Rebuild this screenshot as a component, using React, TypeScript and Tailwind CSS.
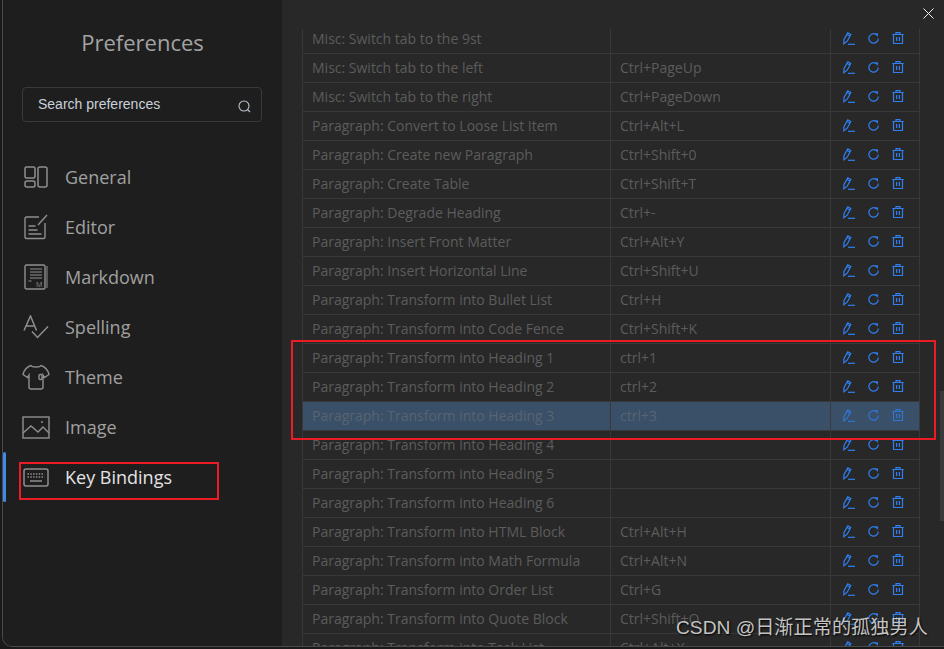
const rows = [
  ['Misc: Switch tab to the 9st', ''],
  ['Misc: Switch tab to the left', 'Ctrl+PageUp'],
  ['Misc: Switch tab to the right', 'Ctrl+PageDown'],
  ['Paragraph: Convert to Loose List Item', 'Ctrl+Alt+L'],
  ['Paragraph: Create new Paragraph', 'Ctrl+Shift+0'],
  ['Paragraph: Create Table', 'Ctrl+Shift+T'],
  ['Paragraph: Degrade Heading', 'Ctrl+-'],
  ['Paragraph: Insert Front Matter', 'Ctrl+Alt+Y'],
  ['Paragraph: Insert Horizontal Line', 'Ctrl+Shift+U'],
  ['Paragraph: Transform into Bullet List', 'Ctrl+H'],
  ['Paragraph: Transform into Code Fence', 'Ctrl+Shift+K'],
  ['Paragraph: Transform into Heading 1', 'ctrl+1'],
  ['Paragraph: Transform into Heading 2', 'ctrl+2'],
  ['Paragraph: Transform into Heading 3', 'ctrl+3'],
  ['Paragraph: Transform into Heading 4', ''],
  ['Paragraph: Transform into Heading 5', ''],
  ['Paragraph: Transform into Heading 6', ''],
  ['Paragraph: Transform into HTML Block', 'Ctrl+Alt+H'],
  ['Paragraph: Transform into Math Formula', 'Ctrl+Alt+N'],
  ['Paragraph: Transform into Order List', 'Ctrl+G'],
  ['Paragraph: Transform into Quote Block', 'Ctrl+Shift+Q'],
  ['Paragraph: Transform into Task List', 'Ctrl+Alt+X'],
];

function GeneralIcon() {
  return (
    <svg width="24" height="22" viewBox="0 0 24 22" fill="none" stroke="#8f8f8f" strokeWidth="1.5">
      <rect x="1" y="1" width="10" height="11" rx="1.5" />
      <rect x="1" y="15" width="10" height="6" rx="2" />
      <rect x="14" y="1" width="9" height="20" rx="2" />
    </svg>
  );
}

function EditorIcon() {
  return (
    <svg width="24" height="26" viewBox="0 0 24 26" fill="none" stroke="#8f8f8f" strokeWidth="1.4">
      <path d="M15 3H2.500A1.500 1.500 0 0 0 1 4.500V23a1.500 1.500 0 0 0 1.500 1.500h17A1.500 1.500 0 0 0 21 23V9" />
      <path d="M14 11l9-10" />
      <path d="M4.500 12h7M4.500 16h9M4.500 20h13" />
    </svg>
  );
}

function MarkdownIcon() {
  return (
    <svg width="24" height="26" viewBox="0 0 24 26" fill="none" stroke="#8f8f8f" strokeWidth="1.4">
      <rect x="1" y="1" width="20" height="24" rx="1.500" />
      <path d="M23 2v22" strokeWidth="1" />
      <path d="M6 5h12M6 8h12M6 11h12M6 14h12M4.500 17h3" strokeWidth="1.100" />
      <text x="12" y="23" fontSize="7" fill="#8f8f8f" stroke="none" fontFamily="'Open Sans', sans-serif">M</text>
    </svg>
  );
}

function SpellingIcon() {
  return (
    <svg width="26" height="24" viewBox="0 0 26 24" fill="none" stroke="#8f8f8f" strokeWidth="1.500">
      <path d="M1 15.500L7.500 1l6 14.500M3 11h9" />
      <path d="M9 16.500l5.500 6L25 11.500" />
    </svg>
  );
}

function ThemeIcon() {
  return (
    <svg width="28" height="26" viewBox="0 0 28 26" fill="none" stroke="#8f8f8f" strokeWidth="1.400">
      <path d="M9 1.500C4.500 3 2 6 1 10.500l4.500 3 1.500-2.500V23a2 2 0 0 0 2 2h10a2 2 0 0 0 2-2V11l1.500 2.500 4.500-3C26 6 23.500 3 19 1.500c-1 2-9 2-10 0z" />
      <rect x="17" y="10.500" width="3" height="5" rx="1" />
    </svg>
  );
}

function ImageIcon() {
  return (
    <svg width="28" height="23" viewBox="0 0 28 23" fill="none" stroke="#8f8f8f" strokeWidth="1.400">
      <rect x="1" y="1" width="26" height="21" />
      <path d="M1 17l8-7 7 6 5-5 6 6" />
      <circle cx="20" cy="6" r="1" fill="#8f8f8f" stroke="none" />
    </svg>
  );
}

function KeyboardIcon() {
  return (
    <svg width="26" height="19" viewBox="0 0 26 19" fill="none" stroke="#8f8f8f" strokeWidth="1.500">
      <rect x="1" y="1" width="24" height="17" rx="2" />
      <path d="M4.500 6h17M4.500 9h17" strokeWidth="1.300" strokeDasharray="1.500 1.300" />
      <path d="M7 13h12" strokeWidth="1.500" />
    </svg>
  );
}

function PencilIcon() {
  return (
    <svg width="12" height="13" viewBox="0 0 12 13" fill="none" stroke="#2f7ff0" strokeWidth="1.200">
      <path d="M.8 11.800l.2-4.300L4.800.900l3 1.500-3.600 6.800-3.400 2.600z" />
      <path d="M4 2.500l3 1.500" />
      <path d="M5 12.300h7" />
    </svg>
  );
}

function RefreshIcon() {
  return (
    <svg width="11" height="11" viewBox="0 0 11 11" fill="none" stroke="#2f7ff0" strokeWidth="1.200">
      <path d="M8 1.400A4.700 4.700 0 1 0 10.300 5.500" />
      <path d="M6.800.300l3.400.300-.6 3.300z" fill="#2f7ff0" stroke="none" />
    </svg>
  );
}

function TrashIcon() {
  return (
    <svg width="12" height="12" viewBox="0 0 12 12" fill="none" stroke="#2f7ff0" strokeWidth="1.200">
      <path d="M.3 2.500h11.400M4 2.500V.700h4v1.800M1.500 2.500v9h9v-9M4.600 5v4M7.400 5v4" />
    </svg>
  );
}

const nav = [
  { label: 'General', icon: <GeneralIcon /> },
  { label: 'Editor', icon: <EditorIcon /> },
  { label: 'Markdown', icon: <MarkdownIcon /> },
  { label: 'Spelling', icon: <SpellingIcon /> },
  { label: 'Theme', icon: <ThemeIcon /> },
  { label: 'Image', icon: <ImageIcon /> },
  { label: 'Key Bindings', icon: <KeyboardIcon />, active: true },
];

export default function App() {
  return (
    <div className="relative w-[944px] h-[649px] overflow-hidden bg-[#1a1a1a] font-['Open_Sans',sans-serif]">
      <div className="flex h-[647px] overflow-hidden rounded-bl-[10px] border-l border-b border-[#4a4a4a] ml-[2px]">
        <aside className="w-[279px] shrink-0 bg-[#1e1e1e]">
          <h1 className="pt-[26px] text-center text-[22px] leading-[33px] text-[#a3a3a3]">Preferences</h1>
          <div className="mt-[28px] ml-[19px] w-[240px] h-[35px] flex items-center justify-between border border-[#3a3a3a] rounded-[4px] pl-[15px] pr-[10px]">
            <span className="font-['Liberation_Sans',sans-serif] text-[14px] text-[#c9d1d9]">Search preferences</span>
            <svg width="13" height="13" viewBox="0 0 13 13" fill="none" stroke="#b8c2cc" strokeWidth="1.100" className="mt-[4px]">
              <circle cx="6" cy="6" r="5" />
              <path d="M9.500 9.500l2.500 2.500" />
            </svg>
          </div>
          <nav className="mt-[30px] flex flex-col">
            {nav.map((item) => (
              <div key={item.label} className="relative h-[50px] flex items-center">
                {item.active && <div className="absolute left-0 top-0 w-[3px] h-[50px] rounded-[2px] bg-[#3f8be8]" />}
                <div className="ml-[18px] mr-[14px] w-[30px] flex items-center justify-center shrink-0">{item.icon}</div>
                <span className={`text-[18px] ${item.active ? 'text-[#e4e4e4]' : 'text-[#a0a0a0]'}`}>{item.label}</span>
              </div>
            ))}
          </nav>
        </aside>
        <main className="flex-1 bg-[#282828] pl-[20px] pt-[29px] overflow-hidden">
          <div className="h-[618px] overflow-hidden">
            <div className="-mt-[4px]">
              {rows.map(([name, key]) => {
                const selected = name.endsWith('Heading 3');
                return (
                  <div key={name} className={`grid grid-cols-[308px_220px_90px] w-[618px] h-[29px] border-b border-[#383838] text-[14px] ${selected ? 'bg-[#3a5068] text-[#586470]' : 'text-[#5c5c5c]'}`}>
                    <div className="border-l border-[#383838] pl-[9px] pb-[2px] flex items-center whitespace-nowrap">{name}</div>
                    <div className="border-l border-[#383838] pl-[9px] pb-[2px] flex items-center">{key}</div>
                    <div className={`border-x border-[#383838] pl-[12px] pb-[2px] flex items-center gap-[13px] ${selected ? 'opacity-80' : ''}`}>
                      <PencilIcon />
                      <RefreshIcon />
                      <TrashIcon />
                    </div>
                  </div>
                );
              })}
            </div>
          </div>
        </main>
      </div>

      <div className="absolute left-[940px] top-[391px] w-[4px] h-[130px] bg-[#3a3a3a]" />
      <svg width="11" height="11" viewBox="0 0 11 11" stroke="#f0f0f0" strokeWidth="1" className="absolute left-[923px] top-[8px]">
        <path d="M.5.500l10 10M10.500.500l-10 10" />
      </svg>

      <div className="absolute left-[291px] top-[340px] w-[645px] h-[100px] border-2 border-[#ed1c24]" />
      <div className="absolute left-[19px] top-[462px] w-[200px] h-[38px] border-2 border-[#ed1c24]" />

      <div className="absolute left-[676px] top-[615px] text-[19.2px] leading-[26px] whitespace-nowrap text-[#c4c4c4] [text-shadow:1px_1px_2px_#000] font-['Liberation_Sans','Noto_Sans_CJK_SC',sans-serif]">
        CSDN @日渐正常的孤独男人
      </div>
    </div>
  );
}
